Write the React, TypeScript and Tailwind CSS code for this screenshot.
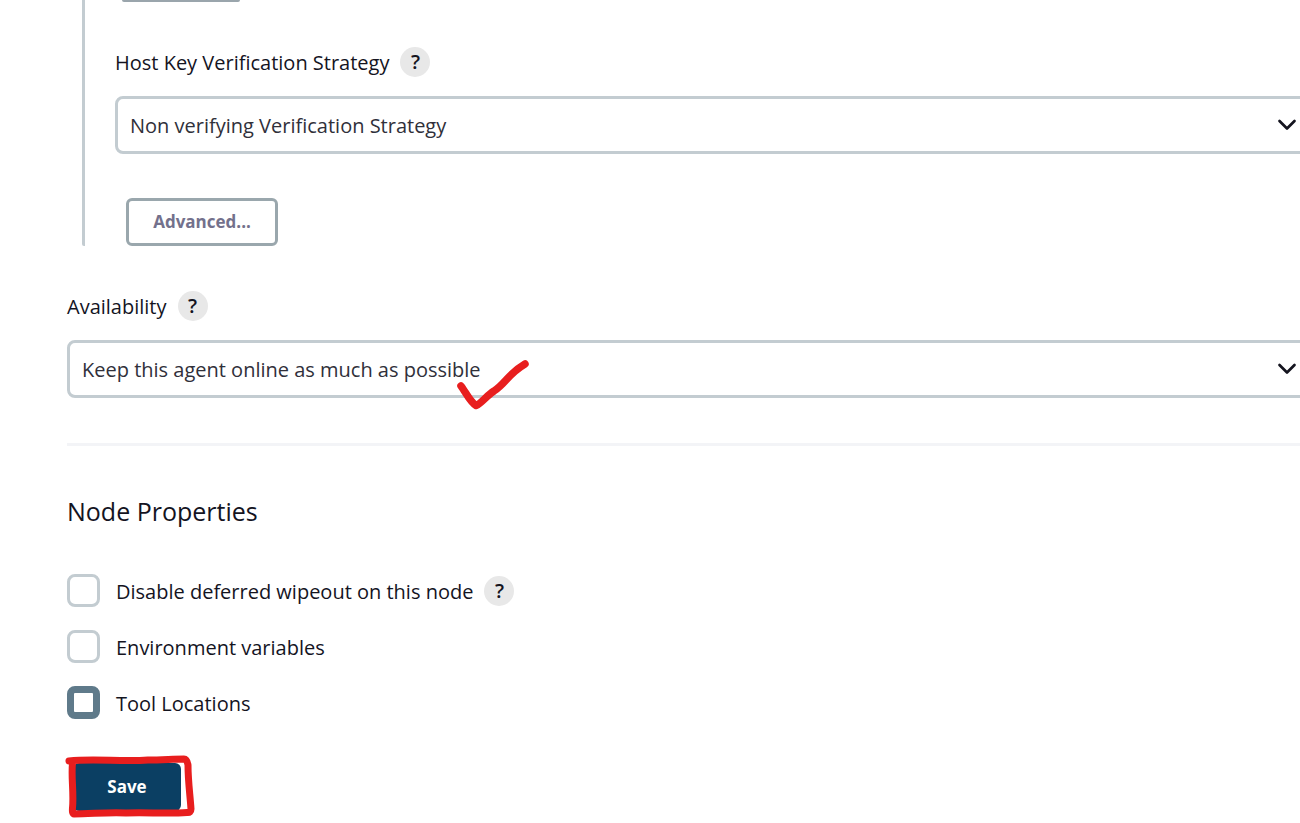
import { useEffect, useRef } from "react";

function Help({ topic }: { topic: string }) {
  return (
    <button
      type="button"
      aria-label={`Help for feature: ${topic}`}
      className="flex size-[30px] shrink-0 items-center justify-center rounded-full bg-[#e8e8e8] text-xl leading-none font-semibold"
    >
      ?
    </button>
  );
}

function Field({ id, label, value }: { id: string; label: string; value: string }) {
  return (
    <div>
      <div className="flex h-[30px] items-center gap-[11px]">
        <label htmlFor={id} className="pt-0.5 text-xl leading-[30px] font-medium">
          {label}
        </label>
        <Help topic={label} />
      </div>
      <div className="relative mt-[19px]">
        <select
          id={id}
          defaultValue={value}
          className="block h-[58px] w-full appearance-none rounded-lg border-[3px] border-[#c3ccd1] bg-white pt-0.5 pr-12 pl-3 text-xl text-[#30303a]"
        >
          <option>{value}</option>
        </select>
        <svg
          viewBox="0 0 20 12"
          fill="none"
          stroke="#14141f"
          strokeWidth="2.7"
          strokeLinecap="round"
          strokeLinejoin="round"
          className="pointer-events-none absolute top-[23px] right-[19px] h-3 w-5"
        >
          <path d="M2.500 2 10 9.500l7.500-7.500" />
        </svg>
      </div>
    </div>
  );
}

function Check({ id, label, help, mixed }: { id: string; label: string; help?: boolean; mixed?: boolean }) {
  const ref = useRef<HTMLInputElement>(null);
  useEffect(() => {
    if (ref.current) ref.current.indeterminate = Boolean(mixed);
  }, [mixed]);
  return (
    <div className="flex h-[33px] items-center">
      <input
        ref={ref}
        id={id}
        type="checkbox"
        className="size-[33px] shrink-0 appearance-none rounded-lg border-[3px] border-[#c3ccd1] bg-white checked:bg-[#607b8b] indeterminate:border-[7px] indeterminate:border-[#5f7a8a]"
      />
      <label htmlFor={id} className="pt-0.5 pl-4 text-xl leading-[30px] font-medium">
        {label}
      </label>
      {help && (
        <span className="pl-[11px]">
          <Help topic={label} />
        </span>
      )}
    </div>
  );
}

export default function App() {
  return (
    <main className="min-h-screen overflow-hidden bg-white font-['Open_Sans',sans-serif] text-[#14141f]">
      <form className="-mr-4 pb-3 pl-[67px]" onSubmit={(e) => e.preventDefault()}>
        <div className="ml-[15px] rounded-bl-xs border-l-[3px] border-[#c3ccd1] pl-[30px]">
          <div className="ml-[7px] h-0.5 w-[118px] rounded-b-lg bg-[#9aa5ac]" />
          <div className="pt-[45px]">
            <Field id="host-key" label="Host Key Verification Strategy" value="Non verifying Verification Strategy" />
          </div>
          <button
            type="button"
            className="mt-11 ml-[11px] block h-12 w-[152px] rounded-md border-[3px] border-[#9aa7ad] bg-white text-[17px] font-bold text-[#73718c]"
          >
            Advanced...
          </button>
        </div>

        <div className="relative mt-[45px]">
          <Field id="availability" label="Availability" value="Keep this agent online as much as possible" />
          <svg
            viewBox="455 355 80 60"
            fill="none"
            stroke="#e81e1e"
            strokeLinecap="round"
            strokeLinejoin="round"
            className="pointer-events-none absolute top-16 left-[388px] h-[60px] w-20"
          >
            <path strokeWidth="7.500" d="M461 386C465 391 470 402 476 405.500C482 403 486 396 494 391C506 383 508 374 525 364" />
          </svg>
        </div>

        <hr className="mt-[45px] border-t-[3px] border-[#f3f4f7]" />
        <h2 className="mt-[47px] text-[25px] leading-9 font-medium">Node Properties</h2>

        <div className="mt-[45px] flex flex-col gap-[23px]">
          <Check id="wipeout" label="Disable deferred wipeout on this node" help />
          <Check id="env" label="Environment variables" />
          <Check id="tools" label="Tool Locations" mixed />
        </div>

        <div className="relative mt-11">
          <button type="submit" className="ml-1.5 block h-12 w-[108px] rounded-md bg-[#0b3f63] text-[17px] font-bold text-white">
            Save
          </button>
          <svg
            viewBox="60 750 140 73"
            fill="none"
            stroke="#e81e1e"
            strokeLinecap="round"
            strokeLinejoin="round"
            className="pointer-events-none absolute -top-[13px] -left-[7px] h-[73px] w-[140px]"
          >
            <path strokeWidth="7" d="M69 761C94 758 120 762 148 760C162 760 173 759 184 759Q187 759 188 765C188 781 190 794 191 809Q191 813 187 812.500C166 814 145 812 126 813C108 812 91 814 74 814Q72 814 72.500 808C74 793 71 777 72.500 763" />
          </svg>
        </div>
      </form>
    </main>
  );
}
